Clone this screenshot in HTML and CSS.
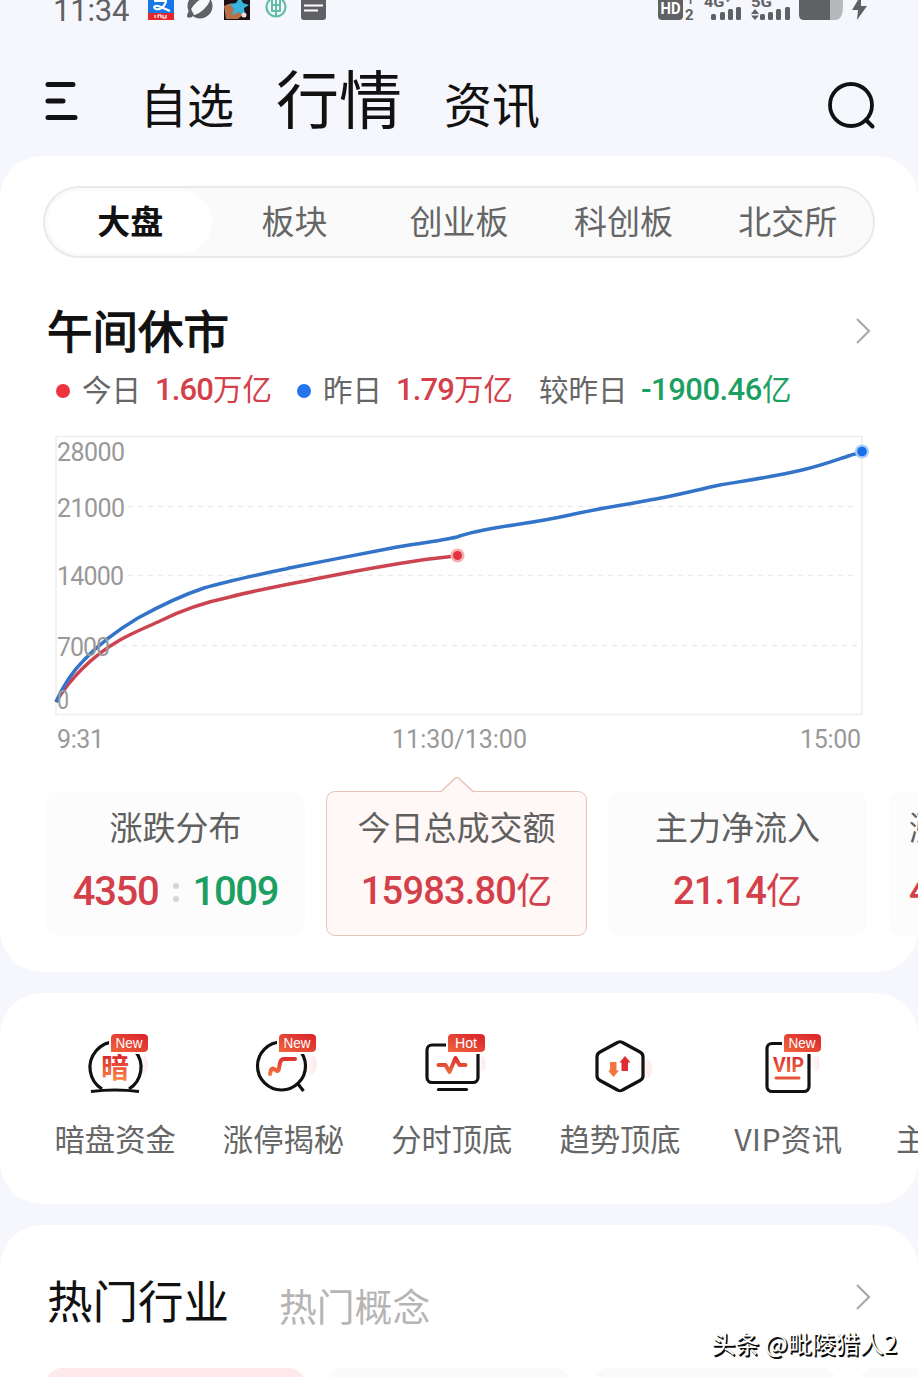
FILE: index.html
```html
<!DOCTYPE html>
<html lang="zh-CN">
<head>
    <meta charset="UTF-8">
    <meta name="viewport" content="width=device-width, initial-scale=1.0">
    <title>行情</title>
    <link rel="stylesheet" href="styles.css">
</head>
<body>
    <div class="status-bar">
        <span class="time">11:34</span>
        <svg class="status-apps" width="180" height="22" viewBox="0 0 180 22">
            <rect x="0" y="-6" width="26" height="26" rx="2" fill="#1677e8"/>
            <path d="M6 1h13M12 -3v5M18 2c-2 5-6 8-10 7-3-1-2-4 2-3 4 1 7 3 12 5" fill="none" stroke="#fff" stroke-width="2.2"/>
            <rect x="0" y="13" width="26" height="7" fill="#e5262d"/>
            <path d="M7 15v3M10 18v-3h3v3M15 15v3h3v-3" fill="none" stroke="#fff" stroke-width="1.2"/>
            <circle cx="52" cy="6" r="12.500" fill="#606164"/>
            <ellipse cx="52" cy="6" rx="12.500" ry="5" transform="rotate(-42 52 6)" fill="#f6f7fb"/>
            <path d="M39 17q0-5 4-8l3 6q-3 4-7 2z" fill="#606164"/>
            <rect x="76" y="-6" width="26" height="26" fill="#1b1014"/>
            <path d="M76 6q8-5 12 0l8 8-6 5H78z" fill="#b4714c"/>
            <path d="M82 4l6-1 4-6 3 6 6 2-5 3 1 8-6-4-7 3 2-6z" fill="#35b5dc"/>
            <path d="M88 -1l5-4 1 5z" fill="#f19b35"/>
            <circle cx="96" cy="15" r="2.5" fill="#f4dcdc"/>
            <circle cx="128" cy="7" r="9.5" fill="none" stroke="#62bda5" stroke-width="2.2"/>
            <path d="M128 -1v17M124 0v11h8V0M124 5h8" fill="none" stroke="#62bda5" stroke-width="2"/>
            <rect x="153" y="-6" width="25" height="26" rx="3" fill="#606164"/>
            <path d="M156 5.500h19M156 10.500h14" stroke="#fff" stroke-width="1.800"/>
        </svg>
        <svg class="status-signal" width="212" height="22" viewBox="0 0 212 22">
            <rect x="0" y="-6" width="25" height="26" rx="4" fill="#606164"/>
            <text class="hd" x="2.500" y="14" textLength="20" lengthAdjust="spacingAndGlyphs">HD</text>
            <text class="net" x="29" y="4" font-size="11">1</text>
            <text class="net" x="27" y="19.500" font-size="15">2</text>
            <text class="net" x="46" y="7" font-size="15" textLength="27" lengthAdjust="spacingAndGlyphs">4G⁺</text>
            <text class="net" x="93" y="7" font-size="15" textLength="21" lengthAdjust="spacingAndGlyphs">5G</text>
            <g fill="#606164">
                <rect x="53" y="14" width="5" height="6" rx="1.500"/>
                <rect x="62" y="12" width="5" height="8" rx="1.500"/>
                <rect x="70" y="9" width="5" height="11" rx="1.500"/>
                <rect x="78" y="7" width="5" height="13" rx="1.500"/>
                <path d="M93 14l4-5 4 5zM93 15.500h8l-4 4.500z"/>
                <rect x="102" y="14" width="5" height="6" rx="1.500"/>
                <rect x="110" y="12" width="5" height="8" rx="1.500"/>
                <rect x="118" y="9" width="5" height="11" rx="1.500"/>
                <rect x="127" y="7" width="5" height="13" rx="1.500"/>
            </g>
            <path d="M172-6h8q5 0 5 8v4q0 14-8 14h-5z" fill="#b7b8bb"/>
            <path d="M141-6h31v26h-26q-5 0-5-5z" fill="#606164"/>
            <path d="M203-5l-9 15h6l-1 10 10-14h-6z" fill="#606164"/>
        </svg>
    </div>

    <header class="top-nav">
        <svg class="menu-icon" width="34" height="40" viewBox="0 0 34 40">
            <path d="M3 3.500h25M3 20h15M3 36.500h27" stroke="#101113" stroke-width="5" stroke-linecap="round"/>
        </svg>
        <nav>
            <a>自选</a>
            <a class="current">行情</a>
            <a class="news">资讯</a>
        </nav>
        <svg class="search-icon" width="50" height="50" viewBox="0 0 50 50">
            <circle cx="24" cy="24" r="21" fill="none" stroke="#101113" stroke-width="3.800"/>
            <path d="M39 39l6.500 6.500" stroke="#101113" stroke-width="4" stroke-linecap="round"/>
        </svg>
    </header>

    <section class="panel market">
        <div class="tabs">
            <span class="active">大盘</span>
            <span>板块</span>
            <span>创业板</span>
            <span>科创板</span>
            <span>北交所</span>
        </div>

        <div class="title-row">
            <h2>午间休市</h2>
            <svg class="chevron" width="18" height="30" viewBox="0 0 18 30"><path d="M3 3l12 12L3 27"/></svg>
        </div>

        <div class="legend">
            <i class="dot red-dot"></i>
            <span class="today-label">今日</span>
            <b class="red today-value"><em>1.60</em>万亿</b>
            <i class="dot blue-dot"></i>
            <span class="yesterday-label">昨日</span>
            <b class="red yesterday-value"><em>1.79</em>万亿</b>
            <span class="diff-label">较昨日</span>
            <b class="green diff-value"><em>-1900.46</em>亿</b>
        </div>

        <svg class="chart" width="830" height="330" viewBox="45 430 830 330">
            <rect x="56" y="436.500" width="806" height="278" class="frame"/>
            <path d="M128 506.500H858M128 575.500H858M112 645.500H858" class="grid"/>
            <path class="line today" d="M56 702C63 690 71 680 82 669C92 659 106 648 120 640C132 633 147 627 160 621C180 611 206 602 230 597C256 590 290 584 320 578C350 572 395 564 425 559.500C438 558 447 557 457 556"/>
            <path class="line yesterday" d="M56 702C63 686 72 672 84 660C98 645 118 630 138 618C158 607 180 596 204 588C232 580 262 574 292 567.500C325 561 360 554 392 548C414 544 440 541 457 537C470 532 500 527 520 524C540 521 556 518 570 515C600 508 625 505 650 500C675 496 696 490 720 485C750 480 777 476 802 470C820 466 836 460 850 455.500C854 453.500 858 454 862 452"/>
            <circle cx="457.500" cy="555.500" r="7" fill="#f7aeb3"/>
            <circle cx="457.500" cy="555.500" r="4.500" fill="#df3440"/>
            <circle cx="862" cy="451.500" r="7" fill="#a9c9fa"/>
            <circle cx="862" cy="451.500" r="4.800" fill="#1b6ee8"/>
            <g class="axis">
                <text x="57" y="461" textLength="68">28000</text>
                <text x="57" y="517" textLength="68">21000</text>
                <text x="57" y="585" textLength="67">14000</text>
                <text x="57" y="656" textLength="53">7000</text>
                <text x="57" y="709" textLength="12" lengthAdjust="spacingAndGlyphs">0</text>
                <text x="57" y="748" textLength="47">9:31</text>
                <text x="392" y="748" textLength="135">11:30/13:00</text>
                <text x="800" y="748" textLength="61">15:00</text>
            </g>
        </svg>

        <div class="cards">
            <div class="card">
                <p>涨跌分布</p>
                <div class="value ratio"><em class="red">4350</em><span class="colon"><i></i><i></i></span><em class="green">1009</em></div>
            </div>
            <div class="card selected">
                <svg class="pointer" width="38" height="17" viewBox="0 0 38 17">
                    <path d="M2 17L19 2l17 15" fill="#fff8f6"/>
                    <path d="M1 15.500h2L17 2.500q2-2 4 0l14 13h2" fill="none" stroke="#e6c3b9" stroke-width="1.500"/>
                </svg>
                <p>今日总成交额</p>
                <div class="value red"><em>15983.80</em>亿</div>
            </div>
            <div class="card">
                <p>主力净流入</p>
                <div class="value red"><em>21.14</em>亿</div>
            </div>
            <div class="card last">
                <p>涨停分析</p>
                <div class="value red"><em>44</em></div>
            </div>
        </div>
    </section>

    <section class="panel shortcuts">
        <svg class="defs" width="0" height="0">
            <defs>
                <linearGradient id="badgeFill" x1="0" y1="1" x2="1" y2="0">
                    <stop offset="0" stop-color="#f0673c"/>
                    <stop offset="1" stop-color="#d91f2b"/>
                </linearGradient>
                <linearGradient id="glyphFill" gradientUnits="userSpaceOnUse" x1="0" y1="24" x2="0" y2="48">
                    <stop offset="0" stop-color="#d81e2c"/>
                    <stop offset="1" stop-color="#f58345"/>
                </linearGradient>
                <linearGradient id="glow" x1="0" y1="0" x2="1" y2="0">
                    <stop offset="0" stop-color="#fff"/>
                    <stop offset="1" stop-color="#fce9ea"/>
                </linearGradient>
                <path id="badge" d="M42 4h28q5 0 5 4v10q0 4-5 4H38V8q0-4 4-4z"/>
            </defs>
        </svg>
        <div class="shortcut">
            <svg width="84" height="70" viewBox="0 0 84 70">
                <path d="M66 26h7q4 12-2 19h-6z" fill="url(#glow)"/>
                <path d="M29 59a25.500 25.500 0 1 1 27 0" class="outline"/>
                <path d="M18 61.500q24-3 48 0" class="outline"/>
                <text x="28" y="47.500" class="glyph" font-size="28">暗</text>
                <use href="#badge" class="badge"/>
                <text x="42.500" y="18" class="badge-text" textLength="27" lengthAdjust="spacingAndGlyphs">New</text>
            </svg>
            <span>暗盘资金</span>
        </div>
        <div class="shortcut">
            <svg width="84" height="70" viewBox="0 0 84 70">
                <path d="M64 26h10q4 12-2 19h-6z" fill="url(#glow)"/>
                <circle cx="40.500" cy="36" r="24" class="outline"/>
                <path d="M57 54l5.500 7" class="outline"/>
                <path d="M29 44l1-4q1-2 3-1l3 2q2 0 2-3l1-5q1-4 4-4h11" class="spark"/>
                <use href="#badge" class="badge"/>
                <text x="42.500" y="18" class="badge-text" textLength="27" lengthAdjust="spacingAndGlyphs">New</text>
            </svg>
            <span>涨停揭秘</span>
        </div>
        <div class="shortcut">
            <svg width="84" height="70" viewBox="0 0 84 70">
                <path d="M68 26h6q3 8 0 15h-6z" fill="url(#glow)"/>
                <rect x="17" y="15" width="51" height="37.500" rx="5" class="outline"/>
                <path d="M28.500 59.500h28" class="outline" stroke-linecap="round"/>
                <path d="M28.500 35h7l4 7 6-14 4 7h6" class="spark"/>
                <use href="#badge" class="badge"/>
                <text x="45" y="18" class="badge-text" textLength="22" lengthAdjust="spacingAndGlyphs">Hot</text>
            </svg>
            <span>分时顶底</span>
        </div>
        <div class="shortcut">
            <svg width="84" height="70" viewBox="0 0 84 70">
                <path d="M58 29h11q8 4 3 19h-10z" fill="url(#glow)"/>
                <path d="M39.500 12.500q2.500-1.500 5 0L62 22q3 1.500 3 5v19q0 3-3 4.500l-17.500 9.500q-2.500 1.500-5 0L22 50.500q-3-1.500-3-4.500V27q0-3.500 3-5z" class="outline"/>
                <path d="M32 32h6.500v8.500h2.500l-5.500 6.500-5.500-6.500h2z" fill="#f2743f"/>
                <path d="M43.500 41h6.500v-8.500h2.500L47 26l-5.500 6.500h2z" fill="#df2b31"/>
            </svg>
            <span>趋势顶底</span>
        </div>
        <div class="shortcut">
            <svg width="84" height="70" viewBox="0 0 84 70">
                <path d="M64 26h8q3 8 0 15h-8z" fill="url(#glow)"/>
                <rect x="21" y="13.500" width="42" height="48" rx="5" class="outline"/>
                <text x="27" y="42" class="glyph vip" textLength="31" lengthAdjust="spacingAndGlyphs">VIP</text>
                <path d="M30 48h23" stroke="#e45438" stroke-width="3" stroke-linecap="round"/>
                <use href="#badge" class="badge"/>
                <text x="42.500" y="18" class="badge-text" textLength="27" lengthAdjust="spacingAndGlyphs">New</text>
            </svg>
            <span class="wide">VIP资讯</span>
        </div>
        <div class="shortcut">
            <svg width="84" height="70"></svg>
            <span>主力资金</span>
        </div>
    </section>

    <section class="panel industry">
        <div class="title-row">
            <h2>热门行业</h2>
            <span class="sub-title">热门概念</span>
            <svg class="chevron" width="18" height="30" viewBox="0 0 18 30"><path d="M3 3l12 12L3 27"/></svg>
        </div>
        <div class="tiles">
            <div class="tile hot"></div>
            <div class="tile"></div>
            <div class="tile"></div>
            <div class="tile"></div>
        </div>
    </section>

    <div class="watermark">头条 @毗陵猎人2</div>
</body>
</html>
```

FILE: styles.css
```css
* {
    box-sizing: border-box;
}

body {
    margin: 0;
    width: 918px;
    height: 1377px;
    overflow: hidden;
    position: relative;
    background-color: #f6f7fc;
    color: #111;
    font-family: "Noto Sans CJK SC", sans-serif;
}

h2, p {
    margin: 0;
    font-weight: normal;
}

em {
    font-style: normal;
    font-family: Roboto, sans-serif;
}

.red {
    color: #d3404a;
}

.green {
    color: #1c9f62;
}

/* status bar */
.status-bar {
    display: flex;
    height: 22px;
    overflow: hidden;
}

.time {
    width: 94px;
    margin-left: 53px;
    font-family: Roboto, sans-serif;
    font-size: 31px;
    line-height: 36px;
    margin-top: -7px;
    color: #606164;
    letter-spacing: -0.2px;
}

.status-apps {
    margin-left: 1px;
}

.status-signal {
    margin-left: 330px;
}

.hd {
    font: bold 16px Roboto, sans-serif;
    fill: #fff;
}

.net {
    font-family: Roboto, sans-serif;
    font-weight: bold;
    fill: #606164;
}

/* header */
.top-nav {
    display: flex;
    height: 134px;
}

.menu-icon {
    margin: 59px 0 0 45px;
}

.top-nav nav {
    display: flex;
    align-items: baseline;
    margin-left: 61px;
    width: 687px;
    height: 134px;
    font-size: 47px;
    line-height: 148px;
}

.top-nav .current {
    font-size: 63px;
    margin-left: 42px;
}

.top-nav .news {
    font-size: 48px;
    margin-left: 42px;
}

.search-icon {
    margin-top: 59px;
}

.panel {
    background-color: #fff;
    border-radius: 42px;
    overflow: hidden;
}

/* market overview */
.market {
    height: 816px;
    padding-top: 30px;
}

.tabs {
    display: flex;
    height: 72px;
    margin: 0 43px;
    padding: 3px;
    border: 2px solid #e9e9e9;
    border-radius: 36px;
    background-color: #fafafa;
}

.tabs span {
    flex: 1;
    border-radius: 32px;
    font-size: 33px;
    line-height: 59px;
    text-align: center;
    color: #666;
}

.tabs .active {
    background-color: #fff;
    color: #111;
    font-weight: bold;
}

.title-row {
    display: flex;
    align-items: center;
    margin: 43px 46px 0 47px;
    height: 60px;
}

.title-row h2 {
    font-size: 45.500px;
    line-height: 56px;
    margin-top: -5px;
}

.market h2 {
    -webkit-text-stroke: 1.300px #111;
}

.chevron {
    margin-left: auto;
    fill: none;
    stroke: #aaa;
    stroke-width: 2.200;
}

.legend {
    display: flex;
    align-items: center;
    height: 50px;
    margin-top: 2px;
    padding-left: 56px;
    font-size: 29.500px;
    line-height: 47px;
    color: #666;
}

.legend b {
    display: flex;
    font-weight: normal;
}

.legend em {
    font-size: 31px;
    font-weight: 500;
    letter-spacing: -0.900px;
    margin-top: 2px;
}

.legend .diff-value em {
    letter-spacing: -0.500px;
}

.dot {
    width: 14px;
    height: 14px;
    border-radius: 50%;
    margin-top: 6px;
}

.red-dot {
    background-color: #ee333c;
}

.blue-dot {
    background-color: #2474ee;
}

.today-label {
    width: 85px;
    padding-left: 12px;
}

.today-value {
    width: 142px;
}

.yesterday-label {
    width: 85px;
    padding-left: 12px;
}

.yesterday-value {
    width: 143px;
}

.diff-label {
    width: 102px;
}

.chart {
    display: block;
    margin: 17px 0 0 45px;
}

.frame {
    fill: none;
    stroke: #ededed;
    stroke-width: 1.500;
}

.grid {
    stroke: #ebebeb;
    stroke-width: 1.500;
    stroke-dasharray: 5 5;
}

.line {
    fill: none;
    stroke-width: 3.500;
    stroke-linejoin: round;
}

.today {
    stroke: #cb4450;
}

.yesterday {
    stroke: #3474c8;
}

.axis {
    font-family: Roboto, sans-serif;
    font-size: 25px;
    fill: #999;
}

.cards {
    display: flex;
    gap: 22px;
    margin-top: 31px;
    padding-left: 46px;
}

.card {
    position: relative;
    flex: none;
    width: 259px;
    height: 145px;
    border-radius: 12px;
    background-color: #fcfcfc;
    text-align: center;
}

.card p {
    font-size: 33px;
    line-height: 50px;
    margin-top: 10px;
    color: #606060;
}

.card.selected {
    width: 261px;
    margin: 0 -1px;
    border: 1.500px solid #e6c3b9;
    border-radius: 9px;
    background-color: #fff8f6;
}

.card.selected p {
    margin-top: 9px;
}

.pointer {
    position: absolute;
    left: 111px;
    top: -16px;
}

.value {
    display: flex;
    justify-content: center;
    align-items: baseline;
    font-size: 36px;
    line-height: 54px;
    margin-top: 10px;
}

.value em {
    font-size: 38px;
    font-weight: 500;
    letter-spacing: -0.800px;
}

.value.ratio {
    align-items: center;
    margin-top: 14px;
}

.value.ratio em {
    font-size: 40px;
    letter-spacing: -1.300px;
}

.colon {
    display: flex;
    flex-direction: column;
    gap: 7px;
    margin: 0 14px;
}

.colon i {
    width: 6px;
    height: 6px;
    border-radius: 50%;
    background-color: #d5d5d5;
}

.card.last {
    text-align: left;
    padding-left: 20px;
}

.card.last .value {
    justify-content: flex-start;
    margin-top: 13px;
}

/* shortcuts */
.shortcuts {
    display: flex;
    height: 211px;
    margin-top: 21px;
    padding: 37px 0 0 31px;
}

.defs {
    position: absolute;
}

.shortcut {
    display: flex;
    flex: none;
    flex-direction: column;
    align-items: center;
    width: 168.300px;
    font-size: 30.300px;
    line-height: 44px;
    color: #666;
}

.shortcut span {
    margin-top: 16px;
}

.shortcut .wide {
    letter-spacing: 0.400px;
}

.outline {
    fill: none;
    stroke: #111;
    stroke-width: 3.200;
}

.spark {
    fill: none;
    stroke: url(#glyphFill);
    stroke-width: 4;
    stroke-linecap: round;
    stroke-linejoin: round;
}

.glyph {
    font-weight: bold;
    fill: url(#glyphFill);
}

.vip {
    font-family: Roboto, sans-serif;
    font-size: 20px;
    font-weight: bold;
}

.badge {
    fill: url(#badgeFill);
    stroke: #fff;
    stroke-width: 4;
    paint-order: stroke;
}

.badge-text {
    font-family: "Liberation Sans", sans-serif;
    font-size: 14px;
    fill: #fff;
}

/* hot industries */
.industry {
    height: 170px;
    margin-top: 21px;
    border-radius: 42px 42px 0 0;
    padding-top: 1px;
}

.industry .title-row {
    margin-top: 45px;
}

.industry .chevron {
    margin-bottom: 8px;
}

.sub-title {
    margin: 7px 0 0 50px;
    font-size: 37.800px;
    line-height: 50px;
    color: #b5b5b5;
}

.tiles {
    display: flex;
    gap: 22px;
    margin-top: 37px;
    padding-left: 46px;
}

.tile {
    flex: none;
    width: 244px;
    height: 60px;
    border-radius: 16px;
    background-color: #fafafa;
}

.tile.hot {
    width: 259px;
    background-color: #feeaeb;
}

.watermark {
    position: absolute;
    right: 21px;
    bottom: 16px;
    font-size: 24px;
    line-height: 36px;
    color: #fff;
    text-shadow: 1px 1px 1px #000, 1.500px 1.500px 0 #111;
}
```
